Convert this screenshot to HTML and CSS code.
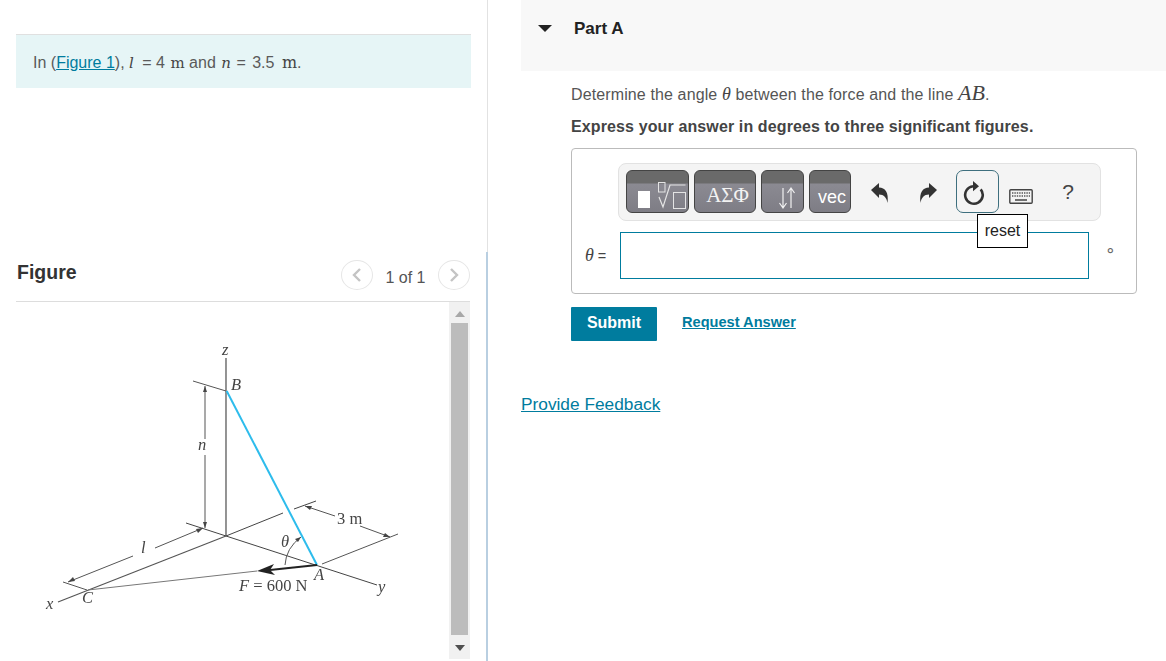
FILE: index.html
```html
<!DOCTYPE html>
<html lang="en">
<head>
<meta charset="utf-8">
<title>Part A</title>
<link rel="stylesheet" href="styles.css">
</head>
<body>
<div class="page">
  <section class="left">
    <p class="intro">In (<a href="#">Figure 1</a>), <i class="mi ell">l</i> = 4 <span class="mr">m</span> and <i class="mi en">n</i> = <span class="num">3.5</span> <span class="mr last">m</span>.</p>
    <div class="fig-head">
      <h2>Figure</h2>
      <div class="pager">
        <span class="circle"><svg width="12" height="16" viewBox="0 0 12 16"><path d="M9 2 3 8l6 6" fill="none" stroke="#c4c4c4" stroke-width="2.4"/></svg></span>
        <span class="count">1 of 1</span>
        <span class="circle"><svg width="12" height="16" viewBox="0 0 12 16"><path d="m3 2 6 6-6 6" fill="none" stroke="#c4c4c4" stroke-width="2.4"/></svg></span>
      </div>
    </div>
    <div class="fig-body">
      <svg class="diagram" viewBox="16 302 433 359" width="433" height="359">
        <defs><filter id="soft"><feGaussianBlur stdDeviation="0.35"/></filter></defs>
        <g filter="url(#soft)">
          <g fill="none" stroke="#555" stroke-width="1">
            <path d="M226 358V536" stroke-width="1.4" stroke="#666"/>
            <path d="M193 381 226 391"/>
            <path d="M205 386V439M205 455V528"/>
            <path d="M186 523 226 536 377 585" stroke="#444"/>
            <path d="M226 536 58 602" stroke-width="1.2" stroke="#555"/>
            <path d="M88 590 257 571" stroke="#777"/>
            <path d="M68 582 133 556M155 548 203 528"/>
            <path d="M63 582 87 590"/>
            <path d="M226 536 283 513M294 509 316 501" stroke="#444"/>
            <path d="M305 506 335 516M360 526 390 537"/>
            <path d="M322 564 398 534"/>
            <path d="M285 565Q286 548 301 537"/>
          </g>
          <path d="M205 386l-2 6h4zM205 528l-2-6h4zM203 528l-7 1 2 4zM68 582l7-1-2-4zM305 506l7 0-2 4zM390 537l-7 0 2-4zM301 537l-6 2 3 3z" fill="#444"/>
          <path d="M317 565 226.7 391" stroke="#2dbcec" stroke-width="2" fill="none"/>
          <path d="M317 565 270 570" stroke="#222" stroke-width="2.2" fill="none"/>
          <path d="M257 571 274 564 270 570 275 575z" fill="#222"/>
          <g class="fig-t">
            <text x="222" y="355" class="it">z</text>
            <text x="231" y="390" class="it">B</text>
            <text x="198" y="450" class="it">n</text>
            <text x="141" y="553" class="it">l</text>
            <text x="46" y="609" class="it">x</text>
            <text x="82" y="603" class="it">C</text>
            <text x="281" y="547" class="it">θ</text>
            <text x="337" y="524">3 m</text>
            <text x="239" y="591"><tspan class="it">F</tspan> = 600 N</text>
            <text x="314" y="580" class="it">A</text>
            <text x="378" y="592" class="it">y</text>
          </g>
        </g>
      </svg>
      <div class="scrollbar">
        <span class="arrow-up"></span>
        <span class="thumb"></span>
        <span class="arrow-down"></span>
      </div>
    </div>
  </section>
  <div class="divider"><span class="d-top"></span><span class="d-bot"></span></div>
  <section class="right">
    <header class="part"><span class="caret"></span><h3>Part A</h3></header>
    <div class="content">
      <p class="q">Determine the angle <i class="mi theta">θ</i> between the force and the line <i class="mi ab">AB</i>.</p>
      <p class="ins">Express your answer in degrees to three significant figures.</p>
      <div class="answer">
        <div class="toolbar">
          <span class="tbtn w1"><svg width="63" height="43" viewBox="0 0 63 43"><rect x="12" y="21" width="12" height="17" fill="#fff"/><g fill="none" stroke="#e4e4e4"><rect x="32.500" y="12.500" width="6.500" height="9.500"/><rect x="47.500" y="22.500" width="12" height="16"/><path d="M33 27l4 10 7-22h15.500" stroke-width="1.200"/></g></svg></span>
          <span class="tbtn w2"><span class="greek">ΑΣΦ</span></span>
          <span class="tbtn w3"><svg width="43" height="43" viewBox="0 0 43 43"><path d="M22 18V38M18.500 33 22 38l3.500-5M30 38V18M26.500 23 30 18l3.500 5" fill="none" stroke="#f2f2f2" stroke-width="1.200"/></svg></span>
          <span class="tbtn w4"><span class="vec">vec</span></span>
          <span class="tool t-undo"><svg width="20" height="22" viewBox="0 0 20 22"><path d="M1 8 9 1v4.500c6 0 10 4.500 8.500 15.500-1-5.500-3.500-8.500-8.500-8.500V16z" fill="#333"/></svg></span>
          <span class="tool t-redo"><svg width="20" height="22" viewBox="0 0 20 22"><path d="M19 8 11 1v4.500C5 5.500 1 10 2.500 21c1-5.500 3.500-8.500 8.500-8.500V16z" fill="#333"/></svg></span>
          <span class="tool t-reset"><svg width="24" height="26" viewBox="0 0 24 26"><path d="M18.700 9.300A8.800 8.800 0 1 1 11 6.200" fill="none" stroke="#333" stroke-width="2.600"/><path d="M11 1l6 5.200-6 5z" fill="#333"/></svg>
            <span class="tip">reset</span></span>
          <span class="tool t-kb"><svg width="24" height="15" viewBox="0 0 24 15"><rect x=".8" y=".8" width="22.400" height="13.400" rx="1" fill="#f4f4f4" stroke="#444" stroke-width="1.400"/><path d="M3 4h18M3 7h18" stroke="#555" stroke-width="1.500" stroke-dasharray="1.400 1"/><path d="M6 11h12" stroke="#444" stroke-width="1.500"/></svg></span>
          <span class="tool t-help">?</span>
        </div>
        <div class="input-row">
          <label class="lbl"><i class="mi theta">θ</i> =</label>
          <span class="field"></span>
          <span class="unit">∘</span>
        </div>
      </div>
      <div class="actions">
        <button class="submit" type="button">Submit</button>
        <a class="req" href="#">Request Answer</a>
      </div>
    </div>
    <a class="feedback" href="#">Provide Feedback</a>
  </section>
</div>
</body>
</html>
```

FILE: styles.css
```css
* { box-sizing: border-box; }
html, body { margin: 0; height: 100%; background: #fff; overflow: hidden; }
body { font-family: "Liberation Sans", Arial, sans-serif; font-size: 16px; color: #555; }
p, h2, h3 { margin: 0; }
a { color: #007c9e; }
.page { display: flex; height: 661px; width: 1166px; }

.left { width: 486px; flex: none; padding: 34px 16px 0 16px; display: flex; flex-direction: column; }
.intro { width: 455px; height: 54px; background: #e6f5f6; border-top: 1px solid #e0e0e0; padding: 17px 0 0 17px; line-height: 22px; font-size: 16px; color: #5a5a5a; white-space: nowrap; }
.mi { font-family: "Liberation Serif", serif; font-style: italic; font-size: 18px; color: #444; }
.mr { font-family: "Liberation Serif", serif; font-size: 18px; color: #444; }
.intro .mi, .intro .mr { font-family: "DejaVu Serif", serif; font-size: 15px; line-height: 16px; }
.intro .mr { margin-left: 1px; }
.intro .ell { margin-right: 4px; }
.intro .en { margin-left: 1px; margin-right: 1px; }
.intro .num { margin-left: 2px; }
.intro .last { margin-left: 3px; font-size: 16px; }
.fig-head { margin-top: 172px; height: 42px; width: 454px; border-bottom: 1px solid #ddd; display: flex; justify-content: space-between; align-items: flex-start; flex: none; }
.fig-head h2 { font-size: 19.500px; line-height: 24px; margin: 0 0 0 1px; color: #333; }
.pager { display: flex; align-items: flex-start; }
.circle { width: 32px; height: 30px; border: 1px solid #e6e6e6; border-radius: 50%; display: flex; align-items: center; justify-content: center; }
.count { width: 65px; text-align: center; color: #555; line-height: 36px; }
.fig-body { flex: 1; display: flex; width: 454px; min-height: 0; }
.diagram { flex: none; display: block; }
.fig-t text { font-family: "Liberation Serif", serif; font-size: 16.500px; fill: #444; }
.fig-t .it { font-style: italic; }
.scrollbar { width: 21px; height: 357px; background: #f1f1f1; display: flex; flex-direction: column; align-items: center; }
.arrow-up { width: 0; height: 0; margin-top: 9px; border: 5px solid transparent; border-top: 0; border-bottom: 6px solid #a8a8a8; }
.thumb { width: 17px; height: 312px; margin-top: 6px; background: #bcbcbc; }
.arrow-down { width: 0; height: 0; margin-top: 10px; border: 5px solid transparent; border-bottom: 0; border-top: 6px solid #505050; }

.divider { width: 2px; flex: none; display: flex; flex-direction: column; align-items: flex-end; }
.d-top { width: 1px; height: 252px; background: #e2e2e2; }
.d-bot { width: 2px; flex: 1; background: #b9cfe1; }

.right { flex: 1; padding-left: 33px; display: flex; flex-direction: column; align-items: flex-start; }
.part { width: 100%; height: 71px; background: #f8f8f8; display: flex; align-items: flex-start; flex: none; }
.caret { width: 0; height: 0; margin: 25px 0 0 17px; border-left: 7px solid transparent; border-right: 7px solid transparent; border-top: 7px solid #222; }
.part h3 { font-size: 17px; line-height: 20px; margin: 19px 0 0 22px; color: #222; }
.content { margin-left: 50px; width: 566px; padding-top: 11px; }
.q { line-height: 22px; color: #555; white-space: nowrap; letter-spacing: .12px; }
.q .ab { font-size: 22px; letter-spacing: 0; }
.theta { font-size: 18px; }
.ins { margin-top: 10px; line-height: 22px; font-weight: 700; color: #444; white-space: nowrap; letter-spacing: .12px; }
.answer { margin-top: 10px; height: 146px; border: 1px solid #bbb; border-radius: 4px; padding: 14px 0 0 46px; }
.toolbar { width: 483px; height: 58px; background: #f4f4f4; border: 1px solid #e2e2e2; border-radius: 8px; display: flex; align-items: flex-start; padding: 6px 0 0 7px; }
.tbtn { height: 43px; margin-right: 5px; flex: none; border: 1px solid #444; border-radius: 6px; background: linear-gradient(#6a6a6a 0, #6a6a6a 12px, #8b8a92 13px, #7e7d85 100%); color: #fff; display: flex; justify-content: center; overflow: hidden; }
.tbtn svg { margin: -1px; flex: none; }
.w1 { width: 63px; }
.w2 { width: 62px; }
.w3 { width: 43px; }
.w4 { width: 42px; }
.greek { font-family: "Liberation Serif", serif; font-size: 21px; line-height: 48px; color: #f2f2f2; padding-left: 5px; }
.vec { font-size: 18px; line-height: 52px; color: #fff; padding-left: 4px; }
.tool { flex: none; height: 43px; display: flex; align-items: center; justify-content: center; position: relative; }
.t-undo, .t-redo { width: 48px; }
.t-undo svg, .t-redo svg { margin-top: 3px; }
.t-redo { margin-right: 4px; }
.t-reset { width: 43px; border: 1px solid #3e6f7e; border-radius: 7px; }
.t-reset svg { margin: 3px 7px 0 0; }
.t-kb { width: 44px; padding-top: 10px; }
.t-help { width: 50px; font-size: 21px; color: #444; }
.tip { position: absolute; left: 20px; top: 43px; width: 51px; height: 34px; background: #fff; border: 1px solid #000; color: #222; font-size: 16px; line-height: 31px; text-align: center; }
.input-row { display: flex; align-items: flex-start; margin-top: 11px; margin-left: -46px; }
.lbl { width: 48px; padding-left: 13px; line-height: 46px; font-size: 14.500px; color: #444; white-space: nowrap; flex: none; }
.field { width: 469px; height: 47px; border: 1px solid #007c9e; flex: none; background: #fff; }
.unit { margin-left: 16px; line-height: 36px; font-size: 17px; color: #666; font-family: "DejaVu Sans", sans-serif; }
.actions { display: flex; align-items: flex-start; margin-top: 13px; }
.submit { width: 86px; height: 34px; border: 0; padding: 0 0 2px; background: #007c9e; color: #fff; font: 700 16px "Liberation Sans", Arial, sans-serif; border-radius: 1px; }
.req { margin-left: 25px; font-size: 14.600px; font-weight: 700; line-height: 30px; }
.feedback { margin-top: 53px; font-size: 17.300px; line-height: 20px; }
```
